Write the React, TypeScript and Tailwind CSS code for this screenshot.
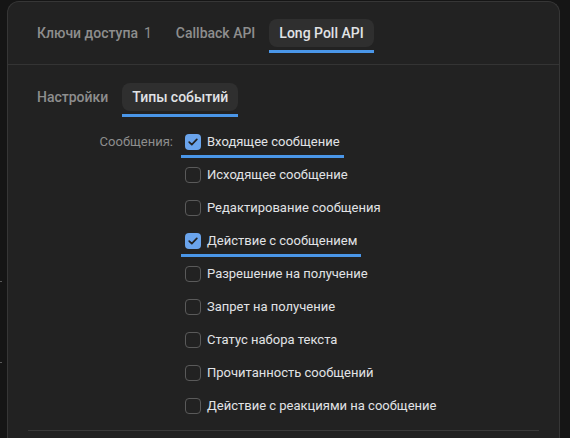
import React, { useState } from 'react';

const topTabs = [
  { key: 'keys', label: 'Ключи доступа', count: 1 },
  { key: 'callback', label: 'Callback API' },
  { key: 'longpoll', label: 'Long Poll API' },
];

const subTabs = [
  { key: 'settings', label: 'Настройки' },
  { key: 'events', label: 'Типы событий' },
];

const events = [
  { key: 'message_new', label: 'Входящее сообщение', checked: true },
  { key: 'message_reply', label: 'Исходящее сообщение', checked: false },
  { key: 'message_edit', label: 'Редактирование сообщения', checked: false },
  { key: 'message_event', label: 'Действие с сообщением', checked: true },
  { key: 'message_allow', label: 'Разрешение на получение', checked: false },
  { key: 'message_deny', label: 'Запрет на получение', checked: false },
  { key: 'message_typing', label: 'Статус набора текста', checked: false },
  { key: 'message_read', label: 'Прочитанность сообщений', checked: false },
  { key: 'message_reaction', label: 'Действие с реакциями на сообщение', checked: false },
];

function Tab({ label, count, active, onClick }: { label: string; count?: number; active: boolean; onClick: () => void }) {
  return (
    <button onClick={onClick} className="flex flex-col items-stretch">
      <span
        className={`h-[28px] px-[10px] rounded-[8px] flex items-center gap-[6px] text-[14px] font-medium leading-none ${
          active ? 'bg-[#2f2f2f] text-[#e1e3e6]' : 'text-[#8e8e8e]'
        }`}
      >
        {label}
        {count !== undefined && <span className="font-normal">{count}</span>}
      </span>
      <span className={`mt-[3px] h-[3px] ${active ? 'bg-[#4a96e8]' : 'bg-transparent'}`} />
    </button>
  );
}

function CheckIcon() {
  return (
    <svg width="10" height="8" viewBox="0 0 10 8" fill="none">
      <path d="M1.2 4.1 3.8 6.6 8.8 1.4" stroke="#222222" strokeWidth="1.7" strokeLinecap="round" strokeLinejoin="round" />
    </svg>
  );
}

export default function App() {
  const [topTab, setTopTab] = useState('longpoll');
  const [subTab, setSubTab] = useState('events');
  const [state, setState] = useState<Record<string, boolean>>(
    Object.fromEntries(events.map((e) => [e.key, e.checked]))
  );

  return (
    <div className="w-full h-[438px] bg-[#151515] flex overflow-hidden" style={{ fontFamily: 'Roboto, "Noto Sans", sans-serif' }}>
      <div className="w-[7px] flex flex-col">
        <span className="mt-[281px] h-px w-[2px] bg-[#5a5a5a]" />
        <span className="mt-[80px] h-px w-[2px] bg-[#5a5a5a]" />
      </div>

      <div className="w-[553px] mt-[1px] bg-[#222222] border border-b-0 border-[#363636] rounded-t-[12px] flex flex-col">
        <div className="flex gap-[4px] px-[19px] pt-[17px] pb-[11px] border-b border-[#343434]">
          {topTabs.map((t) => (
            <Tab key={t.key} label={t.label} count={t.count} active={topTab === t.key} onClick={() => setTopTab(t.key)} />
          ))}
        </div>

        <div className="flex gap-[4px] px-[19px] pt-[18px] pb-[8px]">
          {subTabs.map((t) => (
            <Tab key={t.key} label={t.label} active={subTab === t.key} onClick={() => setSubTab(t.key)} />
          ))}
        </div>

        <div className="flex">
          <div className="w-[165px] h-[33px] flex items-center justify-end text-[13px] text-[#8e8e8e]">Сообщения:</div>
          <div className="ml-[12px] flex flex-col">
            {events.map((e) => {
              const checked = state[e.key];
              return (
                <div key={e.key} className="h-[33px] flex items-center">
                  <label className="relative -ml-[4px] px-[4px] flex items-center gap-[6px] cursor-pointer select-none">
                    <input
                      type="checkbox"
                      className="hidden"
                      checked={checked}
                      onChange={() => setState((s) => ({ ...s, [e.key]: !s[e.key] }))}
                    />
                    <span
                      className={`w-[16px] h-[16px] rounded-[4px] flex items-center justify-center ${
                        checked ? 'bg-[#6aa4ec]' : 'border-[1.5px] border-[#5a5a5a]'
                      }`}
                    >
                      {checked && <CheckIcon />}
                    </span>
                    <span className="text-[13px] text-[#e1e3e6] leading-none">{e.label}</span>
                    {checked && <span className="absolute left-0 right-0 top-[21px] h-[3px] bg-[#4a96e8]" />}
                  </label>
                </div>
              );
            })}
          </div>
        </div>

        <div className="mt-[8px] mx-[20px] h-px bg-[#3a3a3a]" />
      </div>
    </div>
  );
}
